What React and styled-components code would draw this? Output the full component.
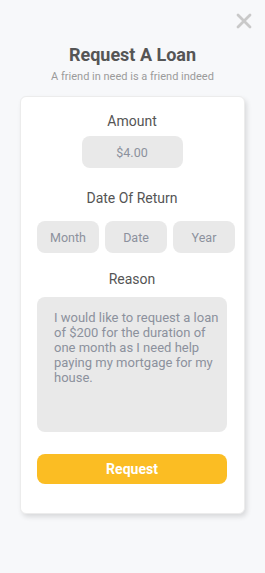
import React from "react";
import styled, { createGlobalStyle } from "styled-components";

const GlobalStyle = createGlobalStyle`
  html, body {
    margin: 0;
    padding: 0;
    background: #f7f8fa;
    font-family: Roboto, "Liberation Sans", sans-serif;
  }
`;

const Page = styled.div`
  width: 265px;
  min-height: 573px;
  display: flex;
  flex-direction: column;
  align-items: stretch;
  background: #f7f8fa;
`;

const TopBar = styled.div`
  display: flex;
  justify-content: flex-end;
  padding: 13px 13px 0 0;
  height: 16px;
`;

const CloseButton = styled.button`
  border: none;
  background: none;
  padding: 0;
  width: 16px;
  height: 16px;
  cursor: pointer;
  display: flex;
`;

const Title = styled.h1`
  margin: 15px 0 0;
  font-size: 18px;
  line-height: 22px;
  font-weight: 700;
  color: #555555;
  text-align: center;
`;

const Subtitle = styled.p`
  margin: 4px 0 0;
  font-size: 11px;
  line-height: 13px;
  color: #9b9b9b;
  text-align: center;
`;

const Card = styled.div`
  margin: 13px 20px 0;
  background: #ffffff;
  border: 1px solid #ececec;
  border-radius: 6px;
  box-shadow: 2px 3px 5px rgba(0, 0, 0, 0.12);
  padding: 16px 17px 29px 16px;
  display: flex;
  flex-direction: column;
`;

const Label = styled.div`
  margin-top: ${(p) => p.mt || 0}px;
  font-size: 14px;
  line-height: 17px;
  color: #555555;
  text-align: center;
`;

const Field = styled.div`
  background: #e9e9e9;
  border-radius: 8px;
  height: 32px;
  width: ${(p) => p.w || "auto"};
  display: flex;
  align-items: center;
  justify-content: center;
  font-size: 12.5px;
  color: #8c919d;
`;

const AmountField = styled(Field)`
  margin-top: 6px;
  align-self: center;
  width: 101px;
`;

const DateRow = styled.div`
  margin-top: 14px;
  width: 198px;
  display: grid;
  grid-template-columns: repeat(3, 1fr);
  gap: 6px;
`;

const ReasonBox = styled.div`
  margin-top: 9px;
  height: 135px;
  box-sizing: border-box;
  background: #e9e9e9;
  border-radius: 8px;
  padding: 13px 8px 13px 17px;
  font-size: 13px;
  line-height: 15px;
  color: #8c919d;
  text-align: left;
`;

const SubmitButton = styled.button`
  margin-top: 22px;
  height: 30px;
  border: none;
  border-radius: 8px;
  background: #fbbd23;
  color: #ffffff;
  font-family: Roboto, "Liberation Sans", sans-serif;
  font-size: 14px;
  font-weight: 700;
  cursor: pointer;
`;

const CloseIcon = () => (
  <svg width="16" height="16" viewBox="0 0 16 16">
    <path
      d="M2 2 L14 14 M14 2 L2 14"
      stroke="#c9c9c9"
      strokeWidth="2.8"
      strokeLinecap="round"
      fill="none"
    />
  </svg>
);

export default function App() {
  return (
    <Page>
      <GlobalStyle />
      <TopBar>
        <CloseButton aria-label="Close">
          <CloseIcon />
        </CloseButton>
      </TopBar>
      <Title>Request A Loan</Title>
      <Subtitle>A friend in need is a friend indeed</Subtitle>
      <Card>
        <Label>Amount</Label>
        <AmountField>$4.00</AmountField>
        <Label mt={22}>Date Of Return</Label>
        <DateRow>
          <Field>Month</Field>
          <Field>Date</Field>
          <Field>Year</Field>
        </DateRow>
        <Label mt={18}>Reason</Label>
        <ReasonBox>
          I would like to request a loan of $200 for the duration of one month
          as I need help paying my mortgage for my house.
        </ReasonBox>
        <SubmitButton>Request</SubmitButton>
      </Card>
    </Page>
  );
}
